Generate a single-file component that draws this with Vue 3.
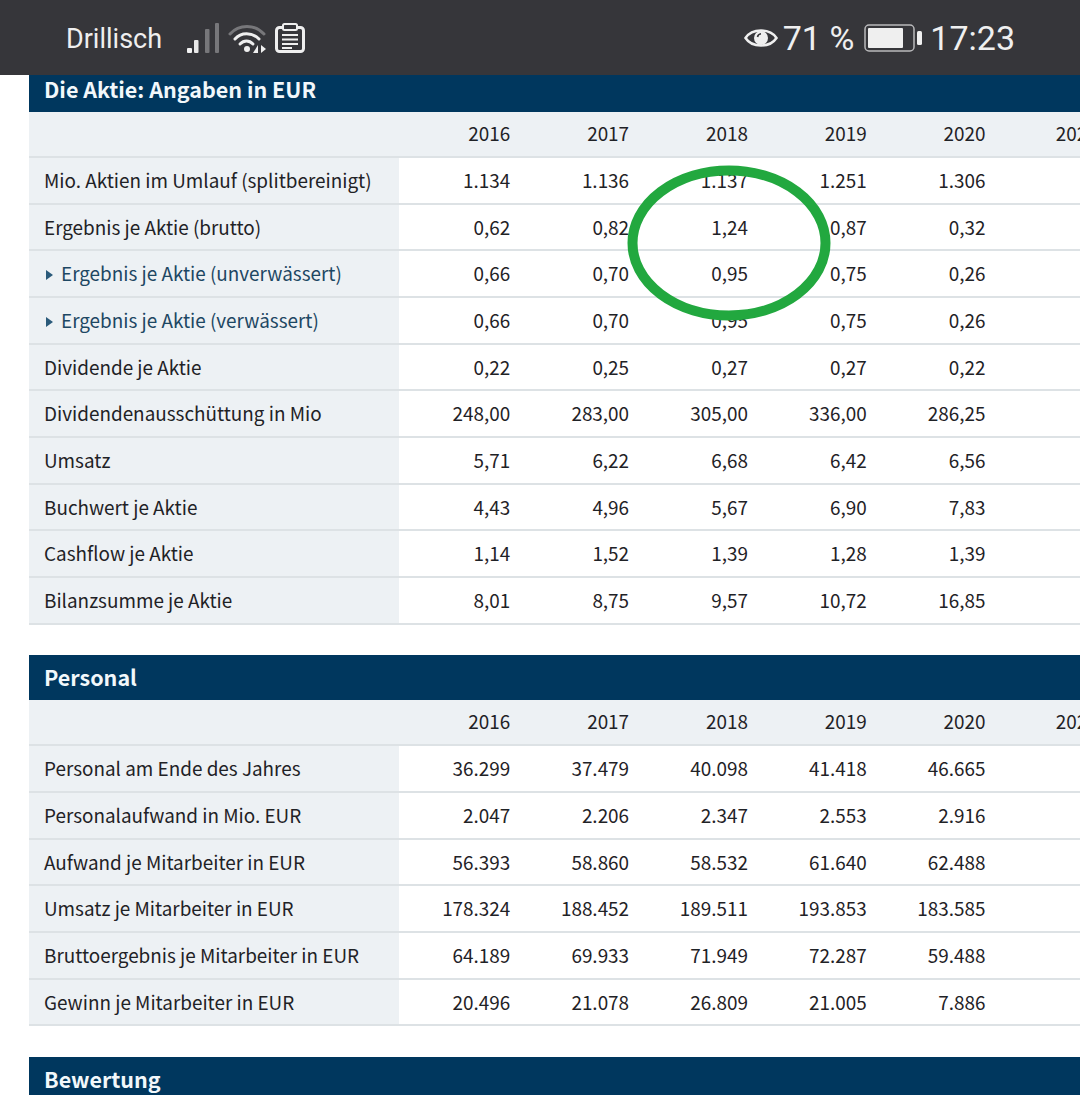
<template>
  <div class="screen">
    <!-- Android-Statusleiste -->
    <header class="statusbar">
      <div class="status-left">
        <span class="carrier">Drillisch</span>
        <svg class="icon-signal" width="34" height="32" viewBox="0 0 34 32">
          <rect x="1" y="26" width="5" height="5" rx="1" fill="#f2f2f2" />
          <rect x="8" y="18" width="4.5" height="13" rx="1" fill="#e8e8e8" />
          <rect x="19" y="7" width="4.500" height="24" rx="1" fill="#77777a" />
          <rect x="29" y="1" width="4" height="30" rx="1" fill="#77777a" />
        </svg>
        <svg class="icon-wifi" width="38" height="32" viewBox="0 0 38 32" fill="none">
          <path d="M2 12 C 11 2, 27 2, 36 12" stroke="#77777a" stroke-width="3" stroke-linecap="round" />
          <path d="M7 17 C 13 10, 24 10, 31 17" stroke="#efefef" stroke-width="3" stroke-linecap="round" />
          <path d="M12 22 C 16 18, 21 18, 25 22" stroke="#efefef" stroke-width="3" stroke-linecap="round" />
          <circle cx="19" cy="27" r="3" fill="#efefef" />
          <path d="M30 23 V31 H25 Z" fill="#efefef" />
          <path d="M33 23 V31 L38 27 Z" fill="#efefef" />
        </svg>
        <svg class="icon-clip" width="30" height="30" viewBox="0 0 30 30" fill="none">
          <rect x="1.500" y="4.500" width="27" height="24" rx="3" stroke="#efefef" stroke-width="3" />
          <rect x="8" y="1" width="14" height="6" rx="1.500" fill="#36363a" stroke="#efefef" stroke-width="2" />
          <path d="M7 12 H23 M7 16.500 H23 M7 21 H23 M7 25 H17" stroke="#efefef" stroke-width="2" />
        </svg>
      </div>
      <div class="status-right">
        <svg class="icon-eye" width="34" height="26" viewBox="0 0 34 26" fill="none">
          <path d="M1.500 13 C 8 3, 26 3, 32.500 13 C 26 23, 8 23, 1.500 13 Z" stroke="#efefef" stroke-width="2.500" />
          <circle cx="17" cy="13" r="7" fill="#efefef" />
          <path d="M13.500 12 A4 4 0 0 1 17 8.800" stroke="#36363a" stroke-width="1.600" />
        </svg>
        <span class="pct">71 %</span>
        <svg class="icon-battery" width="58" height="28" viewBox="0 0 58 28" fill="none">
          <rect x="1" y="1" width="49" height="26" rx="4" stroke="#b9b9bb" stroke-width="1.500" />
          <rect x="4" y="4" width="35" height="20" rx="1" fill="#efefef" />
          <rect x="53" y="7" width="5" height="14" rx="1.500" fill="#efefef" />
        </svg>
        <span class="clock">17:23</span>
      </div>
    </header>

    <main class="content">
      <section v-for="section in sections" :key="section.title" class="section" :class="section.cls">
        <h2 class="section-title">{{ section.title }}</h2>
        <div v-if="section.rows.length" class="row row-head">
          <div class="label"></div>
          <div v-for="y in years" :key="y" class="cell">{{ y }}</div>
        </div>
        <div v-for="row in section.rows" :key="row.name" class="row">
          <div class="label" :class="{ 'label-link': row.link }">
            <span v-if="row.link" class="arrow"></span>{{ row.name }}
          </div>
          <div v-for="(v, i) in row.values" :key="i" class="cell">{{ v }}</div>
          <div class="cell"></div>
        </div>
      </section>

      <!-- grüne Markierung über der Tabelle -->
      <svg class="marker" width="210" height="162" viewBox="0 0 210 162" fill="none">
        <ellipse cx="105" cy="81" rx="96.500" ry="72.500" stroke="#22a83f" stroke-width="10" />
      </svg>
    </main>
  </div>
</template>

<script setup>
const years = ['2016', '2017', '2018', '2019', '2020', '2021']

const sections = [
  {
    title: 'Die Aktie: Angaben in EUR',
    cls: 'section-first',
    rows: [
      { name: 'Mio. Aktien im Umlauf (splitbereinigt)', values: ['1.134', '1.136', '1.137', '1.251', '1.306'] },
      { name: 'Ergebnis je Aktie (brutto)', values: ['0,62', '0,82', '1,24', '0,87', '0,32'] },
      { name: 'Ergebnis je Aktie (unverwässert)', link: true, values: ['0,66', '0,70', '0,95', '0,75', '0,26'] },
      { name: 'Ergebnis je Aktie (verwässert)', link: true, values: ['0,66', '0,70', '0,95', '0,75', '0,26'] },
      { name: 'Dividende je Aktie', values: ['0,22', '0,25', '0,27', '0,27', '0,22'] },
      { name: 'Dividendenausschüttung in Mio', values: ['248,00', '283,00', '305,00', '336,00', '286,25'] },
      { name: 'Umsatz', values: ['5,71', '6,22', '6,68', '6,42', '6,56'] },
      { name: 'Buchwert je Aktie', values: ['4,43', '4,96', '5,67', '6,90', '7,83'] },
      { name: 'Cashflow je Aktie', values: ['1,14', '1,52', '1,39', '1,28', '1,39'] },
      { name: 'Bilanzsumme je Aktie', values: ['8,01', '8,75', '9,57', '10,72', '16,85'] }
    ]
  },
  {
    title: 'Personal',
    rows: [
      { name: 'Personal am Ende des Jahres', values: ['36.299', '37.479', '40.098', '41.418', '46.665'] },
      { name: 'Personalaufwand in Mio. EUR', values: ['2.047', '2.206', '2.347', '2.553', '2.916'] },
      { name: 'Aufwand je Mitarbeiter in EUR', values: ['56.393', '58.860', '58.532', '61.640', '62.488'] },
      { name: 'Umsatz je Mitarbeiter in EUR', values: ['178.324', '188.452', '189.511', '193.853', '183.585'] },
      { name: 'Bruttoergebnis je Mitarbeiter in EUR', values: ['64.189', '69.933', '71.949', '72.287', '59.488'] },
      { name: 'Gewinn je Mitarbeiter in EUR', values: ['20.496', '21.078', '26.809', '21.005', '7.886'] }
    ]
  },
  { title: 'Bewertung', rows: [] }
]
</script>

<style>
html, body {
  margin: 0;
  background: #fff;
}
</style>

<style scoped>
.screen {
  width: 1080px;
  height: 1095px;
  overflow: hidden;
  background: #fff;
  font-family: "Noto Sans CJK SC", "Noto Sans", sans-serif;
}

.statusbar {
  height: 75px;
  background: #36363a;
  color: #efefef;
  display: flex;
  justify-content: space-between;
  font-family: Roboto, sans-serif;
}

.status-left {
  display: flex;
  align-items: center;
  padding-left: 66px;
}

.carrier {
  font-size: 27px;
  margin-top: 2px;
  margin-right: 24px;
}

.icon-wifi {
  margin-left: 8px;
}

.icon-clip {
  margin-left: 9px;
}

.status-right {
  display: flex;
  align-items: center;
  padding-right: 65px;
}

.icon-eye {
  margin-right: -1px;
}

.pct,
.clock {
  font-size: 34px;
}

.pct {
  margin-left: 6px;
  margin-right: 10px;
}

.clock {
  margin-left: 8px;
}

.content {
  position: relative;
  padding-left: 29px;
}

.section {
  margin-bottom: 30.500px;
}

.section-title {
  margin: 0;
  height: 45.300px;
  line-height: 43px;
  padding-left: 15px;
  background: #00375e;
  color: #f2f8fb;
  font-size: 21.500px;
  font-weight: 700;
}

.section-first .section-title {
  height: 37px;
  line-height: 27px;
}

.row {
  display: grid;
  grid-template-columns: 370px repeat(6, 118.800px);
  height: 46.670px;
  box-sizing: border-box;
  border-bottom: 2px solid #dde2e5;
  font-size: 18.900px;
  line-height: 43px;
  color: #1f2226;
}

.row-head {
  background: #edf1f4;
  height: 46px;
  line-height: 42px;
}

.label {
  background: #edf1f4;
  padding-left: 15px;
  white-space: nowrap;
}

.label-link {
  color: #1d4763;
}

.arrow {
  display: inline-block;
  width: 0;
  height: 0;
  margin-left: 2px;
  margin-right: 8px;
  vertical-align: 1px;
  border-left: 7px solid #2a5a7a;
  border-top: 5.500px solid transparent;
  border-bottom: 5.500px solid transparent;
}

.cell {
  text-align: right;
  padding-right: 7.500px;
  white-space: nowrap;
}

/* 2021 steht im Original etwas weiter links */
.cell:last-child {
  padding-right: 14px;
}

.marker {
  position: absolute;
  left: 623.500px;
  top: 86.500px;
}
</style>
